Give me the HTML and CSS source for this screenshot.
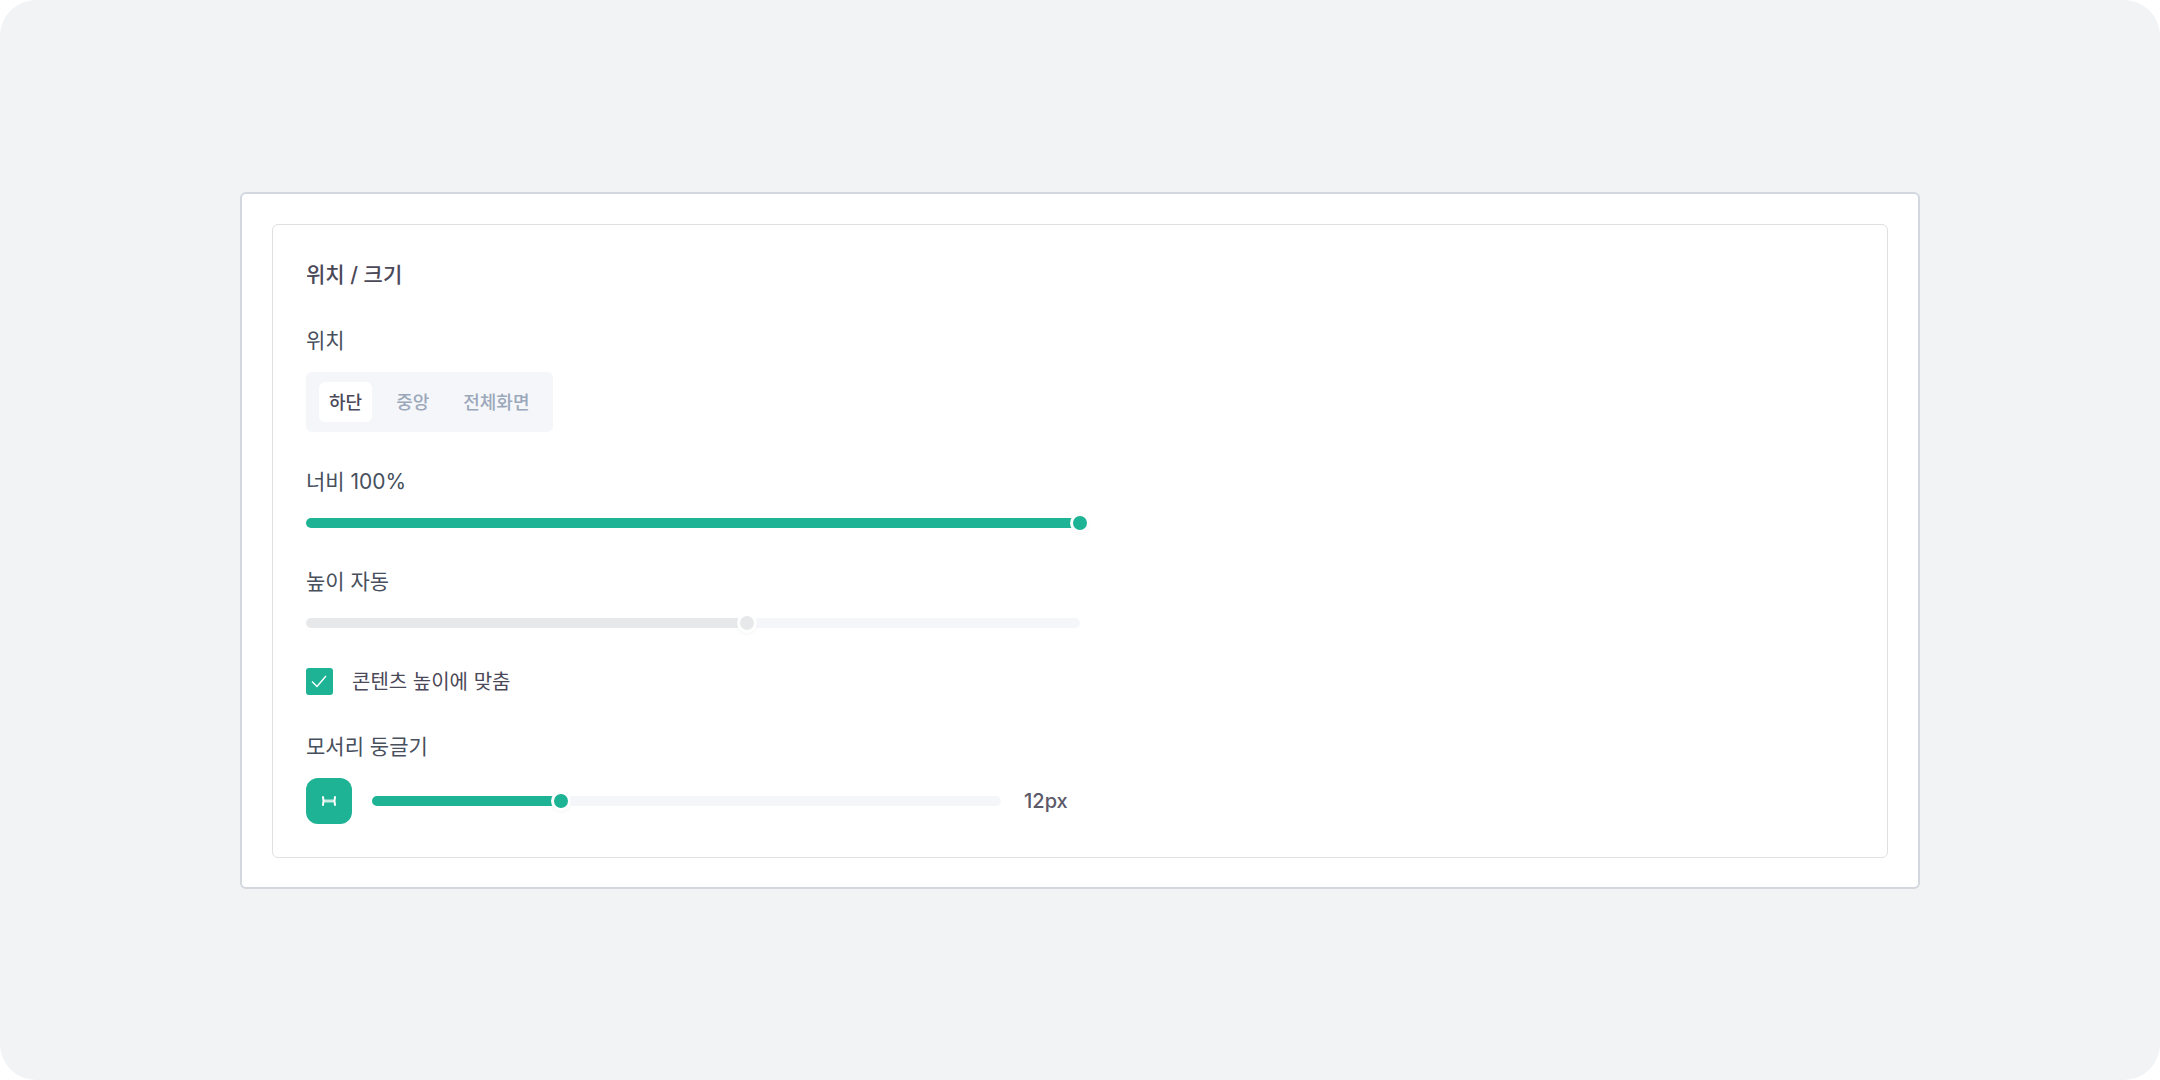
FILE: index.html
```html
<!DOCTYPE html>
<html lang="ko">
<head>
<meta charset="utf-8">
<meta name="viewport" content="width=device-width, initial-scale=1">
<title>위치 / 크기</title>
<link rel="stylesheet" href="styles.css">
</head>
<body>
<main class="stage">
  <div class="card">
    <form class="panel">
      <h2 class="panel-title">위치 / 크기</h2>

      <div class="field">
        <span class="label" id="position-label">위치</span>
        <div class="tabs" role="group" aria-labelledby="position-label">
          <button type="button" class="tab tab-active" aria-pressed="true">하단</button>
          <button type="button" class="tab" aria-pressed="false">중앙</button>
          <button type="button" class="tab" aria-pressed="false">전체화면</button>
        </div>
      </div>

      <div class="field">
        <label class="label" for="width">너비 100%</label>
        <div class="track" style="--value: 100%"><input class="range" id="width" type="range" min="0" max="100" value="100"></div>
      </div>

      <div class="field">
        <label class="label" for="height">높이 자동</label>
        <div class="track track-disabled" style="--value: 57%"><input class="range" id="height" type="range" min="0" max="100" value="57" disabled></div>
      </div>

      <div class="check-row">
        <input class="checkbox" id="fit" type="checkbox" checked>
        <label class="check-label" for="fit">콘텐츠 높이에 맞춤</label>
      </div>

      <div class="field">
        <label class="label" for="radius">모서리 둥글기</label>
        <div class="radius-row">
          <button type="button" class="link-button" aria-label="모서리 연결">
            <svg width="16" height="12" viewBox="0 0 16 12" fill="none" stroke="#fff" stroke-linecap="round" aria-hidden="true">
              <path d="M2 2q1 4 0 8M14 2q-1 4 0 8" stroke-width="2"/>
              <path d="M2 6h12" stroke-width="3" stroke-opacity=".75" stroke-linecap="butt"/>
            </svg>
          </button>
          <div class="track" style="--value: 30%"><input class="range" id="radius" type="range" min="0" max="40" value="12"></div>
          <output class="value" for="radius">12px</output>
        </div>
      </div>
    </form>
  </div>
</main>
</body>
</html>
```
FILE: styles.css
```css
:root {
  --accent: #1eb394;
  --rail: #f5f6fa;
  --text: #4b4858;
  --label: #47505c;
}

* {
  box-sizing: border-box;
}

body {
  margin: 0;
  background: #fff;
  color: var(--text);
  font-family: Inter, "Noto Sans CJK KR", sans-serif;
}

.stage {
  display: flex;
  align-items: center;
  justify-content: center;
  min-height: 100vh;
  padding: 32px;
  border-radius: 36px;
  background: #f2f3f5;
}

.card {
  width: 100%;
  max-width: 1680px;
  padding: 30px 30px 29px;
  border: 2px solid #d3d7de;
  border-radius: 6px;
  background: #fff;
}

.panel {
  display: flex;
  flex-direction: column;
  gap: 35px;
  padding: 34px 33px 33px;
  border: 1px solid #dfe0e2;
  border-radius: 6px;
}

.panel-title {
  margin: 0;
  font-size: 21px;
  font-weight: 500;
  line-height: 32px;
}

.field {
  display: flex;
  flex-direction: column;
  align-items: flex-start;
  gap: 16px;
  width: 774px;
  max-width: 100%;
}

.label {
  color: var(--label);
  font-size: 21px;
  line-height: 30px;
}

.tabs {
  display: flex;
  gap: 14px;
  padding: 10px 13px;
  border-radius: 6px;
  background: var(--rail);
}

.tab {
  height: 40px;
  padding: 0 10px 2px;
  border: 0;
  border-radius: 6px;
  background: transparent;
  color: #9ba8ba;
  font: inherit;
  font-size: 18px;
  font-weight: 500;
}

.tab-active {
  background: #fff;
  color: var(--text);
}

.track {
  display: flex;
  align-items: center;
  width: 100%;
  height: 10px;
  margin: 5px 0 4px;
  border-radius: 5px;
  background: linear-gradient(to right, var(--accent) var(--value), var(--rail) var(--value));
}

.track-disabled {
  --accent: #e7e8e9;
}

.range {
  flex: 0 0 calc(100% + 20px);
  height: 20px;
  margin: 0 -10px;
  appearance: none;
  background: transparent;
}

.range::-webkit-slider-thumb {
  appearance: none;
  width: 20px;
  height: 20px;
  border: 3px solid #fff;
  border-radius: 50%;
  background: var(--accent);
  box-shadow: 0 2px 3px rgb(0 0 0 / 3%);
}

.check-row {
  display: flex;
  align-items: center;
  gap: 19px;
}

.checkbox {
  width: 27px;
  height: 27px;
  margin: 0;
  appearance: none;
  border-radius: 3px;
  background: var(--accent) url("data:image/svg+xml,%3Csvg xmlns='http://www.w3.org/2000/svg' viewBox='0 0 27 27' fill='none' stroke='%23fff' stroke-width='1.4'%3E%3Cpath d='M6 13.5l5 5L20 8'/%3E%3C/svg%3E") center / 27px no-repeat;
}

.check-label {
  font-size: 20px;
  line-height: 30px;
}

.radius-row {
  display: flex;
  align-items: center;
  gap: 20px;
  width: 100%;
}

.link-button {
  display: flex;
  flex: none;
  align-items: center;
  justify-content: center;
  width: 46px;
  height: 46px;
  padding: 0;
  border: 0;
  border-radius: 12px;
  background: var(--accent);
}

.value {
  flex: none;
  width: 59px;
  padding-left: 3px;
  color: #5c5968;
  font-size: 20px;
  font-weight: 500;
  line-height: 30px;
}
```
